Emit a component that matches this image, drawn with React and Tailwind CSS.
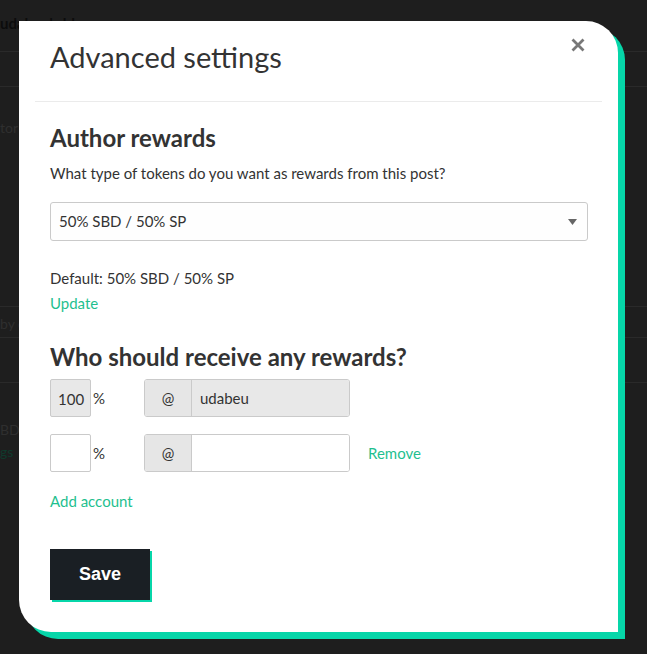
import React from "react";

const font = { fontFamily: "Lato, 'Noto Sans', sans-serif" };

function Background() {
  return (
    <div className="w-[647px] h-[654px] bg-[#1e1e1e] overflow-hidden flex flex-col" style={font}>
      <div className="h-[52px] border-b border-[#2a2a2a] pt-[12px] text-[15px] font-bold text-[#0c0c0c]">udabeu's blog</div>
      <div className="h-[35px] border-b border-[#2a2a2a]"></div>
      <div className="h-[220px] border-b border-[#2a2a2a] pt-[30px] text-[14px] text-[#2f2f2f]">
        <div>tor</div>
      </div>
      <div className="h-[31px] border-b border-[#2a2a2a] pt-[6px] text-[14px] text-[#2f2f2f]">by c</div>
      <div className="h-[45px] border-b border-[#2a2a2a]"></div>
      <div className="pt-[36px] text-[14px] text-[#2f2f2f] leading-[22px]">
        <div>BD</div>
        <div className="text-[#0f3a2c]">gs</div>
      </div>
    </div>
  );
}

function Modal() {
  return (
    <div className="absolute left-[19px] top-[21px] w-[599px] h-[611px]" style={font}>
      <div className="absolute left-[7px] top-[7px] w-[599px] h-[611px] bg-[#06d6a9] rounded-tr-[32px] rounded-bl-[32px]"></div>
      <div className="relative w-[599px] h-[611px] bg-white rounded-tr-[32px] rounded-bl-[32px] px-4">
        <button className="absolute left-[552px] top-[17px] w-[14px] h-[14px] flex items-center justify-center">
          <svg width="14" height="14" viewBox="0 0 14 14">
            <path d="M1.5 1.5 L12.5 12.5 M12.5 1.5 L1.5 12.5" stroke="#777" strokeWidth="2.8" strokeLinecap="butt" />
          </svg>
        </button>
        <div className="h-[81px] border-b border-[#ebebeb] pl-[15px] pt-[17px]">
          <h1 className="text-[29px] leading-[38px] text-[#333] font-normal">Advanced settings</h1>
        </div>
        <div className="pl-[15px] pr-[14px] text-[#333]">
          <h2 className="mt-[21px] text-[24px] leading-[30px] font-bold text-[#333]">Author rewards</h2>
          <p className="mt-[10px] text-[15px] leading-[20px]">What type of tokens do you want as rewards from this post?</p>
          <div className="mt-[19px] h-[39px] border border-[#cacaca] rounded-[3px] bg-[#fefefe] flex items-center justify-between pl-[8px] pr-[10px]">
            <span className="text-[15px]">50% SBD / 50% SP</span>
            <svg width="9" height="6" viewBox="0 0 9 6"><path d="M0 0 H9 L4.5 6 Z" fill="#666" /></svg>
          </div>
          <p className="mt-[27px] text-[15px] leading-[20px]">Default: 50% SBD / 50% SP</p>
          <a className="block mt-[5px] text-[15px] leading-[20px] text-[#1fbf8f]">Update</a>
          <h2 className="mt-[29px] text-[24px] leading-[30px] font-bold text-[#333]">Who should receive any rewards?</h2>
          <div className="mt-[7px] flex items-center h-[38px]">
            <div className="w-[41px] h-[38px] border border-[#cacaca] rounded-[2px] bg-[#e8e8e8] flex items-center pl-[7px] text-[15px] pt-[2px]">100</div>
            <span className="ml-[2px] w-[51px] text-[15px] self-start mt-[8px]">%</span>
            <div className="w-[206px] h-[38px] border border-[#cacaca] rounded-[3px] flex overflow-hidden">
              <div className="w-[47px] bg-[#e6e6e6] border-r border-[#cacaca] flex items-center justify-center text-[15px]">@</div>
              <div className="flex-1 bg-[#e8e8e8] flex items-center pl-[8px] text-[15px]">udabeu</div>
            </div>
          </div>
          <div className="mt-[17px] flex items-center h-[38px]">
            <div className="w-[41px] h-[38px] border border-[#cacaca] rounded-[2px] bg-white"></div>
            <span className="ml-[2px] w-[51px] text-[15px] self-start mt-[8px]">%</span>
            <div className="w-[206px] h-[38px] border border-[#cacaca] rounded-[3px] flex overflow-hidden">
              <div className="w-[47px] bg-[#e6e6e6] border-r border-[#cacaca] flex items-center justify-center text-[15px]">@</div>
              <div className="flex-1 bg-white"></div>
            </div>
            <a className="ml-[18px] text-[15px] text-[#1fbf8f]">Remove</a>
          </div>
          <a className="block mt-[19px] text-[15px] leading-[20px] text-[#1fbf8f]">Add account</a>
          <div className="mt-[38px] relative w-[100px] h-[51px]">
            <div className="absolute left-[2px] top-[2px] w-[100px] h-[51px] bg-[#06d6a9]"></div>
            <button className="relative w-[100px] h-[51px] bg-[#1a1f24] text-white text-[18px] font-bold" style={{ fontFamily: "'Liberation Sans', Arial, sans-serif" }}>Save</button>
          </div>
        </div>
      </div>
    </div>
  );
}

export default function App() {
  return (
    <div className="relative w-[647px] h-[654px] overflow-hidden">
      <Background />
      <Modal />
    </div>
  );
}
